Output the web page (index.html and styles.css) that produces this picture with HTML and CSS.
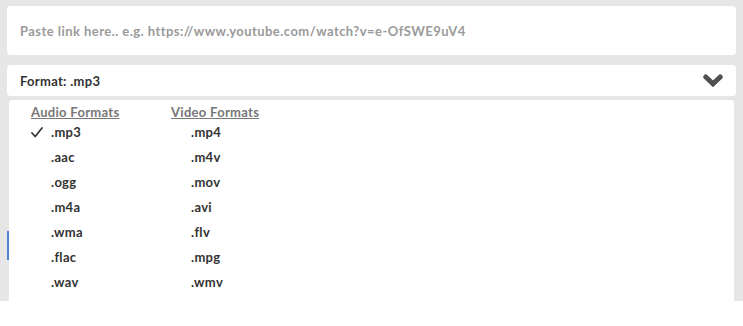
FILE: index.html
```html
<!DOCTYPE html>
<html lang="en">
<head>
  <meta charset="UTF-8">
  <title>Converter</title>
  <link rel="stylesheet" href="styles.css">
</head>
<body>
  <section class="panel">
    <div class="link-box">
      <span class="placeholder">Paste link here.. e.g. https://www.youtube.com/watch?v=e-OfSWE9uV4</span>
    </div>

    <div class="format-bar">
      <span>Format: .mp3</span>
      <svg class="chevron" width="20" height="13" viewBox="0 0 20 13">
        <path d="M2.8 3 L10 9.8 L17.2 3" fill="none" stroke="#505050" stroke-width="5" stroke-linecap="round" stroke-linejoin="miter"/>
      </svg>
    </div>

    <div class="dropdown">
      <span class="focus-line"></span>
      <div class="column">
        <div class="col-title">Audio Formats</div>
        <div class="item selected">
          <svg class="check" width="12" height="11" viewBox="0 0 12 11">
            <path d="M1 6 L4.2 9.5 L11 1" fill="none" stroke="#333" stroke-width="1.7" stroke-linecap="round" stroke-linejoin="round"/>
          </svg>.mp3
        </div>
        <div class="item">.aac</div>
        <div class="item">.ogg</div>
        <div class="item">.m4a</div>
        <div class="item">.wma</div>
        <div class="item">.flac</div>
        <div class="item">.wav</div>
      </div>
      <div class="column">
        <div class="col-title">Video Formats</div>
        <div class="item">.mp4</div>
        <div class="item">.m4v</div>
        <div class="item">.mov</div>
        <div class="item">.avi</div>
        <div class="item">.flv</div>
        <div class="item">.mpg</div>
        <div class="item">.wmv</div>
      </div>
    </div>
  </section>
</body>
</html>
```

FILE: styles.css
```css
body {
  margin: 0;
  font-family: 'Lato', 'Open Sans', sans-serif;
  background-color: #ffffff;
}

.panel {
  background-color: #e6e6e6;
  padding: 6px 7px 0 7px;
  height: 295px;
}

.link-box {
  background-color: #fff;
  border-radius: 4px;
  height: 49px;
  display: flex;
  align-items: center;
  padding-left: 13px;
  box-sizing: border-box;
}

.placeholder {
  color: #9a9a9a;
  font-size: 13px;
  font-weight: 700;
  letter-spacing: 0.45px;
  margin-top: 1px;
}

.format-bar {
  margin-top: 10px;
  background-color: #fff;
  border-radius: 4px;
  height: 31px;
  display: flex;
  align-items: center;
  justify-content: space-between;
  padding: 0 13px 0 13px;
  font-size: 13px;
  font-weight: 700;
  letter-spacing: 0.3px;
  color: #333;
}

.chevron {
  display: block;
}

.dropdown {
  position: relative;
  margin: 4px 2px 0 2px;
  background-color: #fff;
  border-radius: 3px 3px 0 0;
  height: 201px;
  display: flex;
  padding-left: 22px;
  box-sizing: border-box;
}

.focus-line {
  position: absolute;
  left: -2px;
  top: 131px;
  width: 2px;
  height: 29px;
  background-color: #4a86d4;
}

.column {
  width: 140px;
  font-size: 13px;
  font-weight: 700;
  letter-spacing: 0.3px;
  color: #333;
}

.col-title {
  color: #777;
  text-decoration: underline;
  height: 20px;
  line-height: 24px;
}

.item {
  height: 25px;
  line-height: 24px;
  padding-left: 20px;
  position: relative;
}

.check {
  position: absolute;
  left: 0;
  top: 7px;
}
```
